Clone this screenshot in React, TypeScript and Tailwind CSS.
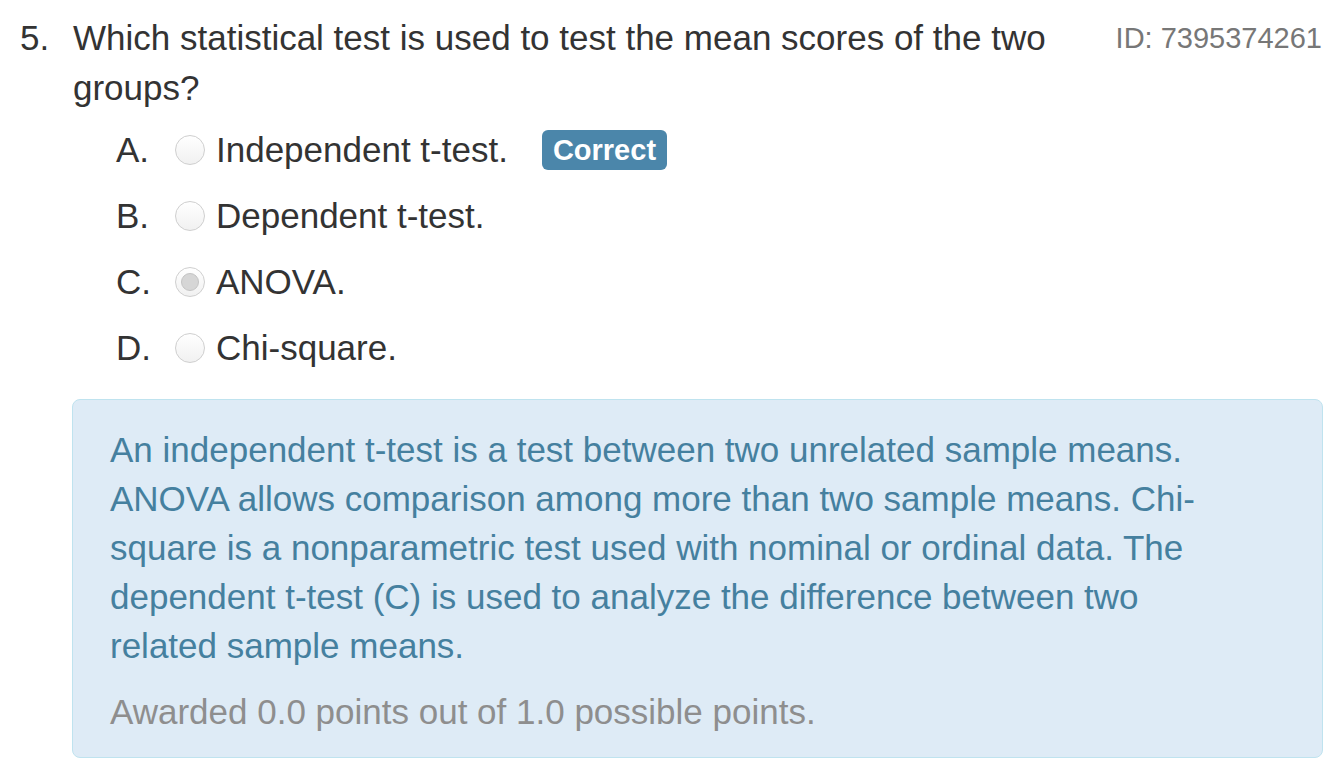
import * as React from 'react'

interface Option {
  letter: string
  text: string
  checked?: boolean
  correct?: boolean
}

const options: Option[] = [
  { letter: 'A.', text: 'Independent t-test.', correct: true },
  { letter: 'B.', text: 'Dependent t-test.' },
  { letter: 'C.', text: 'ANOVA.', checked: true },
  { letter: 'D.', text: 'Chi-square.' },
]

function Radio({ checked }: { checked?: boolean }) {
  return (
    <span className="inline-flex size-[30px] shrink-0 items-center justify-center rounded-full border border-[#cfcfcf] bg-gradient-to-b from-white to-[#f1f1f1]">
      {checked ? (
        <span className="size-[18px] rounded-full border border-[#c4c4c4] bg-[#d6d6d6]" />
      ) : null}
    </span>
  )
}

export default function App() {
  return (
    <div
      className="min-h-screen bg-white pt-[13px] pr-[12px] pl-[20px] text-[#333]"
      style={{ fontFamily: '"Liberation Sans", Arial, sans-serif' }}
    >
      <div className="flex items-start">
        <span className="w-[53px] shrink-0 text-[35px] leading-[50px]">5.</span>
        <p className="w-[1010px] text-[35px] leading-[50px]">
          Which statistical test is used to test the mean scores of the two groups?
        </p>
        <span className="ml-auto text-[29px] leading-[50px] text-[#777]">ID: 7395374261</span>
      </div>

      <ul className="mt-[4px] pl-[96px]">
        {options.map((o) => (
          <li key={o.letter} className="flex h-[66px] items-center">
            <span className="w-[59px] text-[35px]">{o.letter}</span>
            <Radio checked={o.checked} />
            <span className="ml-[11px] text-[35px]">{o.text}</span>
            {o.correct ? (
              <span className="ml-[34px] rounded-[6px] bg-[#4b86aa] px-[11px] py-[3px] text-[29px] leading-[34px] font-bold text-white">
                Correct
              </span>
            ) : null}
          </li>
        ))}
      </ul>

      <div className="mt-[18px] ml-[52px] w-[1251px] rounded-[8px] border border-[#bfe3ef] bg-[#deebf6] pt-[25px] pr-[72px] pb-[21px] pl-[37px]">
        <p className="text-[35px] leading-[49px] text-[#45809f]">
          An independent t-test is a test between two unrelated sample means. ANOVA allows
          comparison among more than two sample means. Chi-square is a nonparametric test used
          with nominal or ordinal data. The dependent t-test (C) is used to analyze the difference
          between two related sample means.
        </p>
        <p className="mt-[17px] text-[35px] leading-[49px] text-[#8e8e8e]">
          Awarded 0.0 points out of 1.0 possible points.
        </p>
      </div>
    </div>
  )
}
